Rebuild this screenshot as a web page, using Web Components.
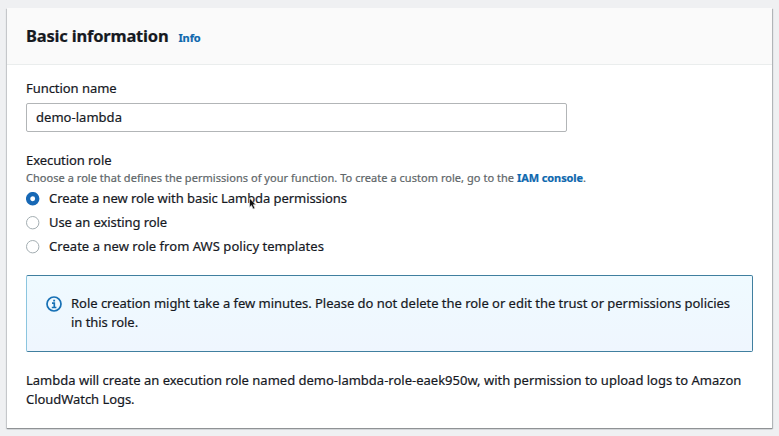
<!DOCTYPE html>
<html lang="en">
<head>
<meta charset="utf-8">
<title>Basic information</title>
<style>
  body { margin: 0; height: 436px; overflow: hidden; background: #eff0f2; color: #16191f; font: 13px/19px "Noto Sans", "Open Sans", sans-serif; -webkit-text-stroke: .2px; }
  .line { display: block; white-space: nowrap; }
  .summary { margin-top: 19px; }
</style>
</head>
<body>
<info-panel>
  <span slot="title">Basic information</span>
  <text-link slot="info" style="letter-spacing:-.14px">Info</text-link>
  <form-field style="--label-spacing:-.05px">
    <span slot="label">Function name</span>
    <text-input value="demo-lambda"></text-input>
  </form-field>
  <form-field style="--label-spacing:-.07px; --control-offset:4px; margin-top:19px">
    <span slot="label">Execution role</span>
    <span slot="hint">Choose a role that defines the permissions of your function. To create a custom role, go to the <text-link style="letter-spacing:-.1px">IAM console</text-link>.</span>
    <radio-option checked style="letter-spacing:-.064px">Create a new role with basic Lambda permissions</radio-option>
    <radio-option style="letter-spacing:-.09px">Use an existing role</radio-option>
    <radio-option style="letter-spacing:.045px">Create a new role from AWS policy templates</radio-option>
  </form-field>
  <info-alert>
    <span class="line" style="letter-spacing:-.027px">Role creation might take a few minutes. Please do not delete the role or edit the trust or permissions policies</span>
    <span class="line" style="letter-spacing:-.04px">in this role.</span>
  </info-alert>
  <div class="summary">
    <span class="line">Lambda will create an execution role named demo-lambda-role-eaek950w, with permission to upload logs to Amazon</span>
    <span class="line" style="letter-spacing:-.05px">CloudWatch Logs.</span>
  </div>
</info-panel>
<mouse-pointer></mouse-pointer>
<script>
const define = (name, html, setup) => {
  const template = document.createElement('template');
  template.innerHTML = html;
  customElements.define(name, class extends HTMLElement {
    connectedCallback() {
      if (this.shadowRoot) return;
      const root = this.attachShadow({ mode: 'open' });
      root.append(template.content.cloneNode(true));
      if (setup) setup(this, root);
    }
  });
};

define('info-panel', `
  <style>
    :host { display: block; padding: 8px 7px 0; }
    section { box-sizing: border-box; height: 420px; background: #fff; box-shadow: 0 1px 1px #8f9295, 1px 1px 1px #b9bcc0, -1px 1px 1px #d0d2d5; }
    header { box-sizing: border-box; height: 57px; display: flex; align-items: baseline; gap: 10px; padding: 16px 19px 0; background: #fafafa; border-bottom: 1px solid #eaeded; }
    h2 { margin: 0; font-size: 16.5px; line-height: 24px; font-weight: 700; letter-spacing: -.19px; }
    ::slotted([slot=info]) { font-size: 11px; }
    main { padding: 14px 19px 0; }
  </style>
  <section><header><h2><slot name="title"></slot></h2><slot name="info"></slot></header><main><slot></slot></main></section>`);

define('text-link', `
  <style>:host { display: inline; color: #0e68ae; font-weight: 700; }</style><slot></slot>`);

define('form-field', `
  <style>
    :host { display: block; }
    .label { letter-spacing: var(--label-spacing, 0); }
    .hint { font-size: 11px; line-height: 15px; letter-spacing: .04px; color: #606669; white-space: nowrap; }
    .controls { display: flex; flex-direction: column; gap: 5px; margin-top: var(--control-offset, 5px); }
  </style>
  <div class="label"><slot name="label"></slot></div>
  <div class="hint"><slot name="hint"></slot></div>
  <div class="controls"><slot></slot></div>`);

define('text-input', `
  <style>
    :host { display: block; box-sizing: border-box; width: 541px; height: 29px; padding: 4px 9px; border: 1px solid #b2b5b7; border-radius: 2px; letter-spacing: .03px; }
  </style><span></span>`, (host, root) => { root.querySelector('span').textContent = host.getAttribute('value'); });

define('radio-option', `
  <style>
    :host { display: flex; align-items: center; gap: 9px; white-space: nowrap; }
    svg { flex: none; display: block; width: 14px; height: 14px; }
    circle { fill: #fff; stroke: #a4aeb2; stroke-width: 1; }
    :host([checked]) circle { r: 4.6px; stroke: #1768b5; stroke-width: 4.3px; }
  </style><svg viewBox="0 0 14 14"><circle cx="6.7" cy="6.7" r="6.2"/></svg><span><slot></slot></span>`);

define('info-alert', `
  <style>
    :host { display: flex; box-sizing: border-box; height: 77px; margin-top: 19px; padding: 18px 19px; gap: 9px; border: 1px solid #407f9f; border-left-color: #8bc5df; border-radius: 2px; background: linear-gradient(#effaff, #eff6fe); }
    svg { flex: none; width: 16px; height: 16px; margin-top: 1.5px; }
  </style>
  <svg viewBox="0 0 16 16" fill="none" stroke="#1670b5" stroke-width="1.7"><circle cx="8" cy="8" r="7"/><path d="M6 7.2h2.3v4.2M5.8 11.5h4.6M7.2 4.6h1.9"/></svg>
  <div><slot></slot></div>`);

define('mouse-pointer', `
  <style>:host { position: absolute; left: 248px; top: 197px; } svg { display: block; }</style>
  <svg width="10" height="14" viewBox="0 0 10 14"><path d="M1.5 1v9.2l2-1.8 1.6 3.6 1.8-.8-1.6-3.5h2.6z" fill="#111" stroke="#ddd" stroke-width=".7"/></svg>`);
</script>
</body>
</html>
